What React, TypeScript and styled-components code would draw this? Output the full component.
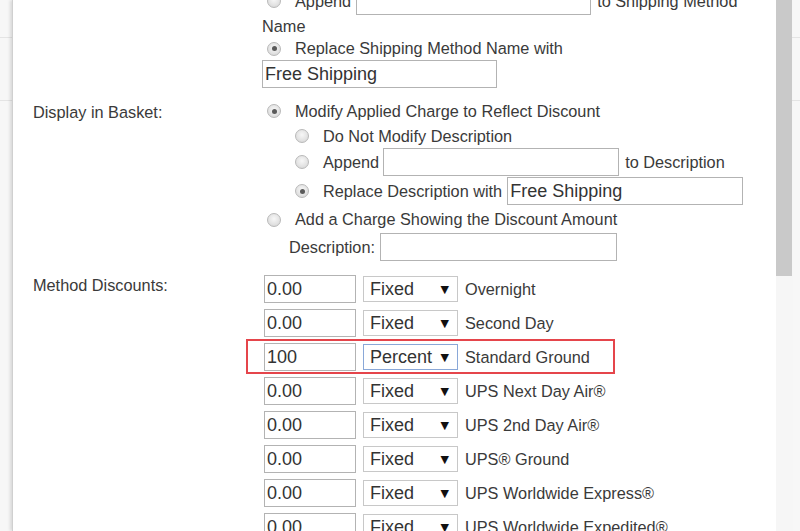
import React from 'react';
import styled, { createGlobalStyle } from 'styled-components';

const Global = createGlobalStyle`
  html, body { margin: 0; padding: 0; }
  body {
    width: 800px;
    height: 531px;
    overflow: hidden;
    font-family: "Liberation Sans", Arial, sans-serif;
    color: #3a3a3a;
  }
`;

const Page = styled.div`
  display: flex;
  width: 800px;
  height: 531px;
  overflow: hidden;
  background:
    linear-gradient(
      to bottom,
      transparent 37px, #e4e4e4 37px, #e4e4e4 38px, transparent 38px,
      transparent 100px, #e4e4e4 100px, #e4e4e4 101px, transparent 101px
    ),
    #f7f7f7;
`;

const Gutter = styled.div`
  width: 12px;
  flex: none;
`;

const Dialog = styled.div`
  width: 779px;
  flex: none;
  display: flex;
  background: #fff;
  border-left: 1px solid #d0d0d0;
  box-shadow: -2px 0 3px rgba(0, 0, 0, 0.12);
`;

const Content = styled.div`
  flex: 1;
  padding-left: 20px;
  overflow: hidden;
`;

const Scrollbar = styled.div`
  width: 16px;
  flex: none;
  background: #f6f6f6;
  display: flex;
  flex-direction: column;
`;

const Thumb = styled.div`
  height: 276px;
  background: #c9c9c9;
`;

const Section = styled.div<{ $mt: number }>`
  display: flex;
  margin-top: ${(p) => p.$mt}px;
`;

const FieldLabel = styled.div<{ $pt?: number }>`
  width: 229px;
  flex: none;
  font-size: 16.3px;
  line-height: 20px;
  padding-top: ${(p) => p.$pt ?? 0}px;
`;

const Field = styled.div`
  display: flex;
  flex-direction: column;
`;

const Line = styled.div<{ $h: number; $indent?: number }>`
  display: flex;
  align-items: center;
  height: ${(p) => p.$h}px;
  padding-left: ${(p) => p.$indent ?? 0}px;
  font-size: 16.3px;
  white-space: nowrap;
`;

const Radio = styled.span<{ $on?: boolean }>`
  position: relative;
  flex: none;
  width: 14px;
  height: 14px;
  box-sizing: border-box;
  border-radius: 50%;
  margin: 0 14px 0 5px;
  border: 1px solid #b9b9b9;
  background: radial-gradient(circle at 50% 40%, #f7f7f7 0%, #e2e2e2 60%, #cfcfcf 100%);
  &::after {
    content: '';
    display: ${(p) => (p.$on ? 'block' : 'none')};
    position: absolute;
    left: 3.5px;
    top: 3.5px;
    width: 5px;
    height: 5px;
    border-radius: 50%;
    background: #5a5a5a;
  }
`;

const TextInput = styled.input<{ $w?: number; $ml?: number; $mr?: number }>`
  box-sizing: border-box;
  width: ${(p) => p.$w ?? 236}px;
  height: 28px;
  margin: 0 ${(p) => p.$mr ?? 0}px 0 ${(p) => p.$ml ?? 0}px;
  padding: 0 2px;
  border: 1px solid #b3b3b3;
  border-radius: 0;
  background: #fff;
  font-family: "Liberation Sans", Arial, sans-serif;
  font-size: 18px;
  color: #333;
  outline: none;
`;

const MethodRow = styled.div`
  position: relative;
  display: flex;
  align-items: center;
  height: 28px;
  margin-bottom: 6px;
  padding-left: 2px;
`;

const SelectBox = styled.div<{ $focus?: boolean }>`
  box-sizing: border-box;
  width: 95px;
  height: 26px;
  margin-left: 7px;
  display: flex;
  align-items: center;
  justify-content: space-between;
  padding: 0 8px 0 6px;
  border: 1px solid ${(p) => (p.$focus ? '#8aa8d8' : '#c8c8c8')};
  background: #fff;
  font-size: 18px;
  color: #333;
`;

const Arrow = styled.span`
  font-family: "DejaVu Sans", sans-serif;
  font-size: 11px;
  color: #111;
`;

const MethodName = styled.span`
  margin-left: 7px;
  font-size: 16.3px;
  white-space: nowrap;
`;

const Highlight = styled.div`
  position: absolute;
  left: -16px;
  top: -4px;
  width: 369px;
  height: 35px;
  box-sizing: border-box;
  border: 2.5px solid #e5454b;
  pointer-events: none;
`;

const methods = [
  { amount: '0.00', type: 'Fixed', name: 'Overnight' },
  { amount: '0.00', type: 'Fixed', name: 'Second Day' },
  { amount: '100', type: 'Percent', name: 'Standard Ground', hl: true },
  { amount: '0.00', type: 'Fixed', name: 'UPS Next Day Air®' },
  { amount: '0.00', type: 'Fixed', name: 'UPS 2nd Day Air®' },
  { amount: '0.00', type: 'Fixed', name: 'UPS® Ground' },
  { amount: '0.00', type: 'Fixed', name: 'UPS Worldwide Express®' },
  { amount: '0.00', type: 'Fixed', name: 'UPS Worldwide Expedited®' },
];

export default function App() {
  return (
    <>
      <Global />
      <Page>
        <Gutter />
        <Dialog>
          <Content>
            <Section $mt={-13}>
              <FieldLabel />
              <Field>
                <Line $h={28}>
                  <Radio />
                  Append
                  <TextInput $w={235} $ml={5} $mr={6} readOnly value="" />
                  to Shipping Method
                </Line>
                <Line $h={22}>Name</Line>
                <Line $h={23}>
                  <Radio $on />
                  Replace Shipping Method Name with
                </Line>
                <Line $h={28}>
                  <TextInput $w={235} readOnly value="Free Shipping" />
                </Line>
              </Field>
            </Section>

            <Section $mt={10}>
              <FieldLabel $pt={4}>Display in Basket:</FieldLabel>
              <Field>
                <Line $h={26}>
                  <Radio $on />
                  Modify Applied Charge to Reflect Discount
                </Line>
                <Line $h={24} $indent={28}>
                  <Radio />
                  Do Not Modify Description
                </Line>
                <Line $h={28} $indent={28}>
                  <Radio />
                  Append
                  <TextInput $ml={4} $mr={6} readOnly value="" />
                  to Description
                </Line>
                <Line $h={30} $indent={28}>
                  <Radio $on />
                  Replace Description with
                  <TextInput $ml={5} readOnly value="Free Shipping" />
                </Line>
                <Line $h={27}>
                  <Radio />
                  Add a Charge Showing the Discount Amount
                </Line>
                <Line $h={28} $indent={27}>
                  Description:
                  <TextInput $w={237} $ml={5} readOnly value="" />
                </Line>
              </Field>
            </Section>

            <Section $mt={14}>
              <FieldLabel>Method Discounts:</FieldLabel>
              <Field>
                {methods.map((m) => (
                  <MethodRow key={m.name}>
                    <TextInput $w={92} readOnly value={m.amount} />
                    <SelectBox $focus={m.hl}>
                      <span>{m.type}</span>
                      <Arrow>▼</Arrow>
                    </SelectBox>
                    <MethodName>{m.name}</MethodName>
                    {m.hl && <Highlight />}
                  </MethodRow>
                ))}
              </Field>
            </Section>
          </Content>
          <Scrollbar>
            <Thumb />
          </Scrollbar>
        </Dialog>
      </Page>
    </>
  );
}
